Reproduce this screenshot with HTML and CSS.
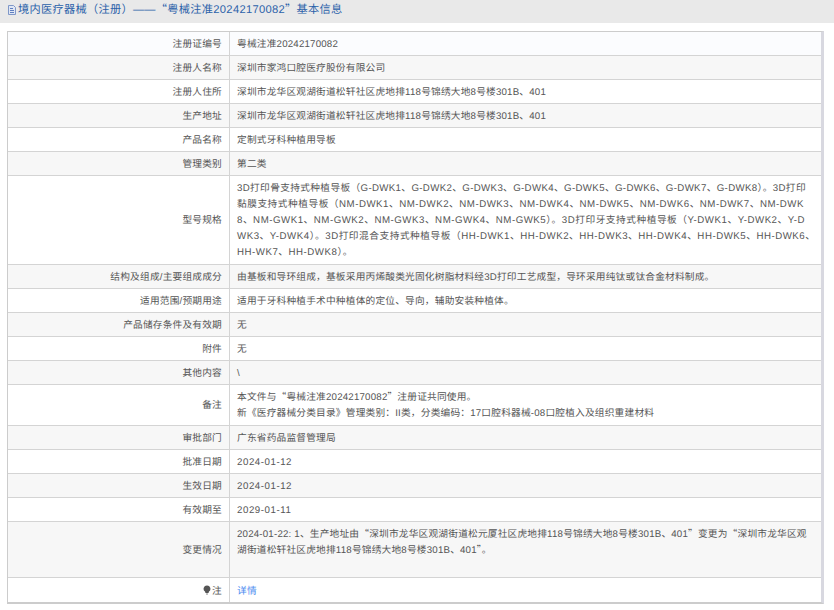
FILE: index.html
```html
<!DOCTYPE html>
<html lang="zh-CN">
<head>
    <meta charset="UTF-8">
    <meta name="viewport" content="width=device-width, initial-scale=1.0">
    <title>境内医疗器械（注册）基本信息</title>
    <link rel="stylesheet" href="styles.css">
</head>
<body>
    <div class="title-bar">
        <svg class="doc-icon" viewBox="0 0 10 10" width="10" height="10">
            <path d="M1.5 .5h5l2 2v7h-7z" fill="#dfe6f4" stroke="#7f97c8" stroke-width="1"/>
            <path d="M3 3.500h3 M3 5.500h4 M3 7.500h4" fill="none" stroke="#5f7fc0" stroke-width="1"/>
        </svg>
        <span>境内医疗器械（注册）——<span class="qt">“</span>粤械注准20242170082<span class="qt">”</span>基本信息</span>
    </div>
    <div class="content">
        <table class="info-table">
            <tr><td class="label">注册证编号</td><td class="value">粤械注准20242170082</td></tr>
            <tr><td class="label">注册人名称</td><td class="value">深圳市家鸿口腔医疗股份有限公司</td></tr>
            <tr><td class="label">注册人住所</td><td class="value">深圳市龙华区观湖街道松轩社区虎地排118号锦绣大地8号楼301B、401</td></tr>
            <tr><td class="label">生产地址</td><td class="value">深圳市龙华区观湖街道松轩社区虎地排118号锦绣大地8号楼301B、401</td></tr>
            <tr><td class="label">产品名称</td><td class="value">定制式牙科种植用导板</td></tr>
            <tr><td class="label">管理类别</td><td class="value">第二类</td></tr>
            <tr class="multi"><td class="label">型号规格</td><td class="value spec">3D打印骨支持式种植导板（G-DWK1、G-DWK2、G-DWK3、G-DWK4、G-DWK5、G-DWK6、G-DWK7、G-DWK8）。3D打印<br><span class="wide">黏膜支持式种植导板（NM-DWK1、NM-DWK2、NM-DWK3、NM-DWK4、NM-DWK5、NM-DWK6、NM-DWK7、NM-DWK<br>8、NM-GWK1、NM-GWK2、NM-GWK3、NM-GWK4、NM-GWK5）。3D打印牙支持式种植导板（Y-DWK1、Y-DWK2、Y-D<br>WK3、Y-DWK4）。3D打印混合支持式种植导板（HH-DWK1、HH-DWK2、HH-DWK3、HH-DWK4、HH-DWK5、HH-DWK6、<br>HH-WK7、HH-DWK8）。</span></td></tr>
            <tr><td class="label">结构及组成/主要组成成分</td><td class="value">由基板和导环组成，基板采用丙烯酸类光固化树脂材料经3D打印工艺成型，导环采用纯钛或钛合金材料制成。</td></tr>
            <tr><td class="label">适用范围/预期用途</td><td class="value">适用于牙科种植手术中种植体的定位、导向，辅助安装种植体。</td></tr>
            <tr><td class="label">产品储存条件及有效期</td><td class="value">无</td></tr>
            <tr><td class="label">附件</td><td class="value">无</td></tr>
            <tr><td class="label">其他内容</td><td class="value">\</td></tr>
            <tr class="multi"><td class="label">备注</td><td class="value">本文件与<span class="qt">“</span>粤械注准20242170082<span class="qt">”</span>注册证共同使用。<br>新《医疗器械分类目录》管理类别：II类，分类编码：17口腔科器械-08口腔植入及组织重建材料</td></tr>
            <tr><td class="label">审批部门</td><td class="value">广东省药品监督管理局</td></tr>
            <tr><td class="label">批准日期</td><td class="value date">2024-01-12</td></tr>
            <tr><td class="label">生效日期</td><td class="value date">2024-01-12</td></tr>
            <tr><td class="label">有效期至</td><td class="value date">2029-01-11</td></tr>
            <tr><td class="label">变更情况</td><td class="value">2024-01-22: 1、生产地址由<span class="qt">“</span>深圳市龙华区观湖街道松元厦社区虎地排118号锦绣大地8号楼301B、401<span class="qt">”</span>变更为<span class="qt">“</span>深圳市龙华区观<br>湖街道松轩社区虎地排118号锦绣大地8号楼301B、401<span class="qt">”</span>。<br>&nbsp;</td></tr>
            <tr class="last-row">
                <td class="label">
                    <svg class="bulb-icon" viewBox="0 0 8 10" width="8" height="10">
                        <path d="M4 .5a3.300 3.300 0 0 1 2 6l-.5 1.500h-3l-.5-1.500a3.300 3.300 0 0 1 2-6z" fill="#555"/>
                        <path d="M3 9h2" stroke="#888" stroke-width="1"/>
                    </svg>注
                </td>
                <td class="value"><a href="#">详情</a></td>
            </tr>
        </table>
    </div>
</body>
</html>
```

FILE: styles.css
```css
body {
    margin: 0;
    background-color: #fff;
    color: #555;
    font-family: "Liberation Sans", "Noto Sans CJK SC", sans-serif;
    font-size: 9.7px;
    letter-spacing: .2px;
    text-rendering: geometricPrecision;
}

.qt {
    font-family: "Noto Sans CJK SC", sans-serif;
    line-height: 1;
}

.title-bar {
    display: flex;
    align-items: flex-start;
    height: 23px;
    padding-left: 7px;
    background-color: #e9e9e9;
    color: #2c62a9;
    font-size: 11.2px;
    letter-spacing: .3px;
    line-height: 20px;
}

.doc-icon {
    margin: 5px 1px 0 0;
}

.content {
    padding: 8px 10px 0 7px;
}

.info-table {
    width: 100%;
    border-collapse: separate;
    border-spacing: 0;
    table-layout: fixed;
    border: 1px solid #ccc;
    border-width: 1px 3px 2px 1px;
    border-right-color: #d8d8e0;
}

.info-table td {
    border-bottom: 1px solid #d4d4d4;
    line-height: 16px;
    padding: 5px 7px 2px;
}

.info-table .multi td {
    padding-bottom: 3px;
}

.info-table .last-row td {
    border-bottom: none;
    padding-top: 6px;
}

.info-table tr:nth-child(even) td {
    background-color: #f7f7f7;
}

.info-table tr:first-child td {
    background-color: #fbfcfe;
}

.label {
    width: 207px;
    text-align: right;
    border-right: 1px solid #d4d4d4;
}

.value {
    white-space: nowrap;
}

.spec {
    letter-spacing: .35px;
}

.spec .wide {
    letter-spacing: .52px;
}

.date {
    letter-spacing: .55px;
}

.value a {
    color: #4d8cf0;
    text-decoration: none;
}

.bulb-icon {
    margin-right: 1px;
    vertical-align: -1px;
}
```
